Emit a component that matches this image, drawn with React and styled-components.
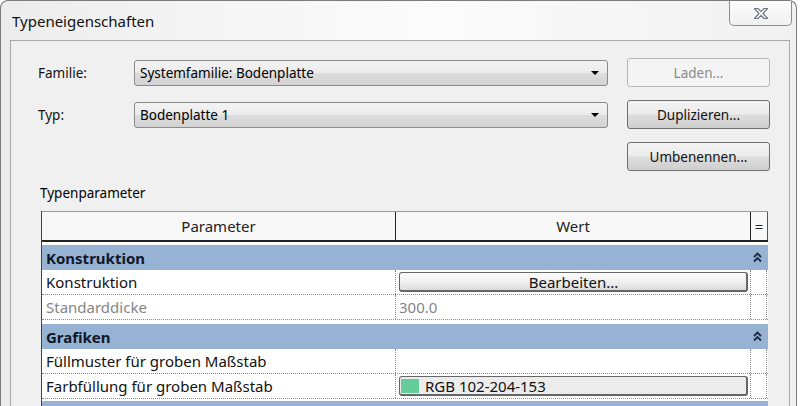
import React from "react";
import styled, { createGlobalStyle } from "styled-components";

const GlobalStyle = createGlobalStyle`
  html, body {
    margin: 0;
    padding: 0;
    background: #ffffff;
    overflow: hidden;
  }
  body {
    width: 800px;
    height: 406px;
    font-family: "Noto Sans", "Open Sans", sans-serif;
    color: #000;
  }
`;

const Window = styled.div`
  box-sizing: border-box;
  width: 797px;
  height: 406px;
  overflow: hidden;
  border: 1px solid #7b7b7b;
  border-bottom: none;
  border-radius: 8px 8px 0 0;
  background: linear-gradient(90deg, #ececec 0%, #f6f6f6 30%, #fbfbfb 55%, #f1f1f1 100%);
  padding: 0 6px 0 9px;
  display: flex;
  flex-direction: column;
`;

const TitleBar = styled.div`
  flex-shrink: 0;
  height: 39px;
  display: flex;
  justify-content: space-between;
  align-items: flex-start;
`;

const Title = styled.div`
  padding: 10px 0 0 2px;
  font-size: 15px;
  line-height: 20px;
  color: #111;
`;

const CloseButton = styled.div`
  width: 63px;
  height: 25px;
  margin-right: -2px;
  box-sizing: border-box;
  border: 1px solid #8d8d8d;
  border-top: none;
  border-radius: 0 0 5px 5px;
  background: linear-gradient(#fdfdfd, #f0f0f0);
  display: flex;
  align-items: center;
  justify-content: center;
`;

const Client = styled.div`
  flex: 1;
  min-height: 0;
  overflow: hidden;
  border: 1px solid #a8a8a8;
  border-bottom: none;
  background: #f0f0f0;
  padding: 17px 19px 0 27px;
`;

const FormGrid = styled.div`
  display: grid;
  grid-template-columns: 77px 474px 143px;
  grid-auto-rows: 29px;
  column-gap: 19px;
  row-gap: 13px;
  align-items: center;
  font-size: 13.5px;
`;

const Label = styled.div`
  color: #111;
`;

const Combo = styled.div`
  height: 26px;
  box-sizing: border-box;
  border: 1px solid #8a8a8a;
  border-radius: 3px;
  background: linear-gradient(#f4f4f4 0%, #ebebeb 48%, #dddddd 52%, #d3d3d3 100%);
  display: flex;
  align-items: center;
  justify-content: space-between;
  padding: 0 8px 0 5px;
`;

const Arrow = styled.span`
  width: 0;
  height: 0;
  border-left: 4px solid transparent;
  border-right: 4px solid transparent;
  border-top: 4px solid #000;
`;

const Button = styled.div`
  height: 29px;
  box-sizing: border-box;
  border: 1px solid ${(p) => (p.disabled ? "#b4b8bb" : "#707070")};
  border-radius: 3px;
  background: ${(p) =>
    p.disabled
      ? "#f4f4f4"
      : "linear-gradient(#f3f3f3 0%, #ebebeb 48%, #dddddd 52%, #cfcfcf 100%)"};
  color: ${(p) => (p.disabled ? "#8a8a8a" : "#111")};
  display: flex;
  align-items: center;
  justify-content: center;
`;

const Spacer = styled.div``;

const SectionLabel = styled.div`
  margin: 13px 0 9px 2px;
  font-size: 13.5px;
  line-height: 18px;
`;

const Table = styled.div`
  margin-left: 3px;
  width: 726px;
  background: #fff;
  font-size: 15px;
  border-left: 1px solid #444;
`;

const HeaderRow = styled.div`
  display: grid;
  grid-template-columns: 354px 355px 17px;
  height: 28px;
  border-top: 1px solid #9a9a9a;
  border-bottom: 2px solid #222;
  background: #f8f8f8;
`;

const HeaderCell = styled.div`
  display: flex;
  align-items: center;
  justify-content: center;
  border-right: ${(p) => (p.last ? "1px solid #555" : "1px solid #222")};
  color: #222;
`;

const GroupRow = styled.div`
  margin-top: ${(p) => p.gap}px;
  height: 25px;
  background: #97b3d3;
  display: flex;
  align-items: center;
  justify-content: space-between;
  padding: 0 6px 0 4px;
  font-weight: bold;
  color: #101828;
`;

const Row = styled.div`
  display: grid;
  grid-template-columns: 354px 355px 16px;
  height: 24px;
  border-bottom: 1px dotted #8a8a8a;
`;

const NameCell = styled.div`
  display: flex;
  align-items: center;
  padding-left: 4px;
  color: ${(p) => (p.muted ? "#858585" : "#111")};
  border-right: 1px dotted #8a8a8a;
`;

const ValueCell = styled.div`
  display: flex;
  align-items: center;
  padding: 0 2px 0 3px;
  color: ${(p) => (p.muted ? "#858585" : "#111")};
  border-right: 1px dotted #8a8a8a;
`;

const EndCell = styled.div`
  border-right: 1px dotted #8a8a8a;
`;

const CellButton = styled.div`
  flex: 1;
  height: 20px;
  box-sizing: border-box;
  border: 1px solid #666;
  border-right-width: 2px;
  border-bottom-width: 2px;
  border-radius: 3px;
  background: ${(p) =>
    p.flat ? "#ececec" : "linear-gradient(#fdfdfd 0%, #f0f0f0 50%, #dcdcdc 100%)"};
  display: flex;
  align-items: center;
  justify-content: ${(p) => (p.flat ? "flex-start" : "center")};
  gap: 6px;
  padding-left: 1px;
  color: #111;
`;

const Swatch = styled.span`
  width: 18px;
  height: 14px;
  background: rgb(102, 204, 153);
`;

const CloseIcon = () => (
  <svg width="16" height="13" viewBox="0 0 16 13">
    <path
      d="M1.5 1.5 H5 L8 4.6 L11 1.5 H14.5 L10 6.5 L14.5 11.5 H11 L8 8.4 L5 11.5 H1.5 L6 6.5 Z"
      fill="#fff"
      stroke="#6d7680"
      strokeWidth="1.2"
      strokeLinejoin="round"
    />
  </svg>
);

const Collapse = () => (
  <svg width="9" height="11" viewBox="0 0 9 11">
    <path d="M1 5 L4.5 1.5 L8 5 M1 9.5 L4.5 6 L8 9.5" fill="none" stroke="#1b2a44" strokeWidth="1.8" />
  </svg>
);

const App = () => (
  <>
    <GlobalStyle />
    <Window>
      <TitleBar>
        <Title>Typeneigenschaften</Title>
        <CloseButton>
          <CloseIcon />
        </CloseButton>
      </TitleBar>
      <Client>
        <FormGrid>
          <Label>Familie:</Label>
          <Combo>
            <span>Systemfamilie: Bodenplatte</span>
            <Arrow />
          </Combo>
          <Button disabled>Laden...</Button>

          <Label>Typ:</Label>
          <Combo>
            <span>Bodenplatte 1</span>
            <Arrow />
          </Combo>
          <Button>Duplizieren...</Button>

          <Spacer />
          <Spacer />
          <Button>Umbenennen...</Button>
        </FormGrid>

        <SectionLabel>Typenparameter</SectionLabel>

        <Table>
          <HeaderRow>
            <HeaderCell>Parameter</HeaderCell>
            <HeaderCell>Wert</HeaderCell>
            <HeaderCell last>=</HeaderCell>
          </HeaderRow>

          <GroupRow gap={3}>
            <span>Konstruktion</span>
            <Collapse />
          </GroupRow>
          <Row>
            <NameCell>Konstruktion</NameCell>
            <ValueCell>
              <CellButton>Bearbeiten...</CellButton>
            </ValueCell>
            <EndCell />
          </Row>
          <Row>
            <NameCell muted>Standarddicke</NameCell>
            <ValueCell muted>300.0</ValueCell>
            <EndCell />
          </Row>

          <GroupRow gap={4}>
            <span>Grafiken</span>
            <Collapse />
          </GroupRow>
          <Row>
            <NameCell>Füllmuster für groben Maßstab</NameCell>
            <ValueCell />
            <EndCell />
          </Row>
          <Row>
            <NameCell>Farbfüllung für groben Maßstab</NameCell>
            <ValueCell>
              <CellButton flat>
                <Swatch />
                <span>RGB 102-204-153</span>
              </CellButton>
            </ValueCell>
            <EndCell />
          </Row>
          <GroupRow gap={2} />
        </Table>
      </Client>
    </Window>
  </>
);

export default App;
